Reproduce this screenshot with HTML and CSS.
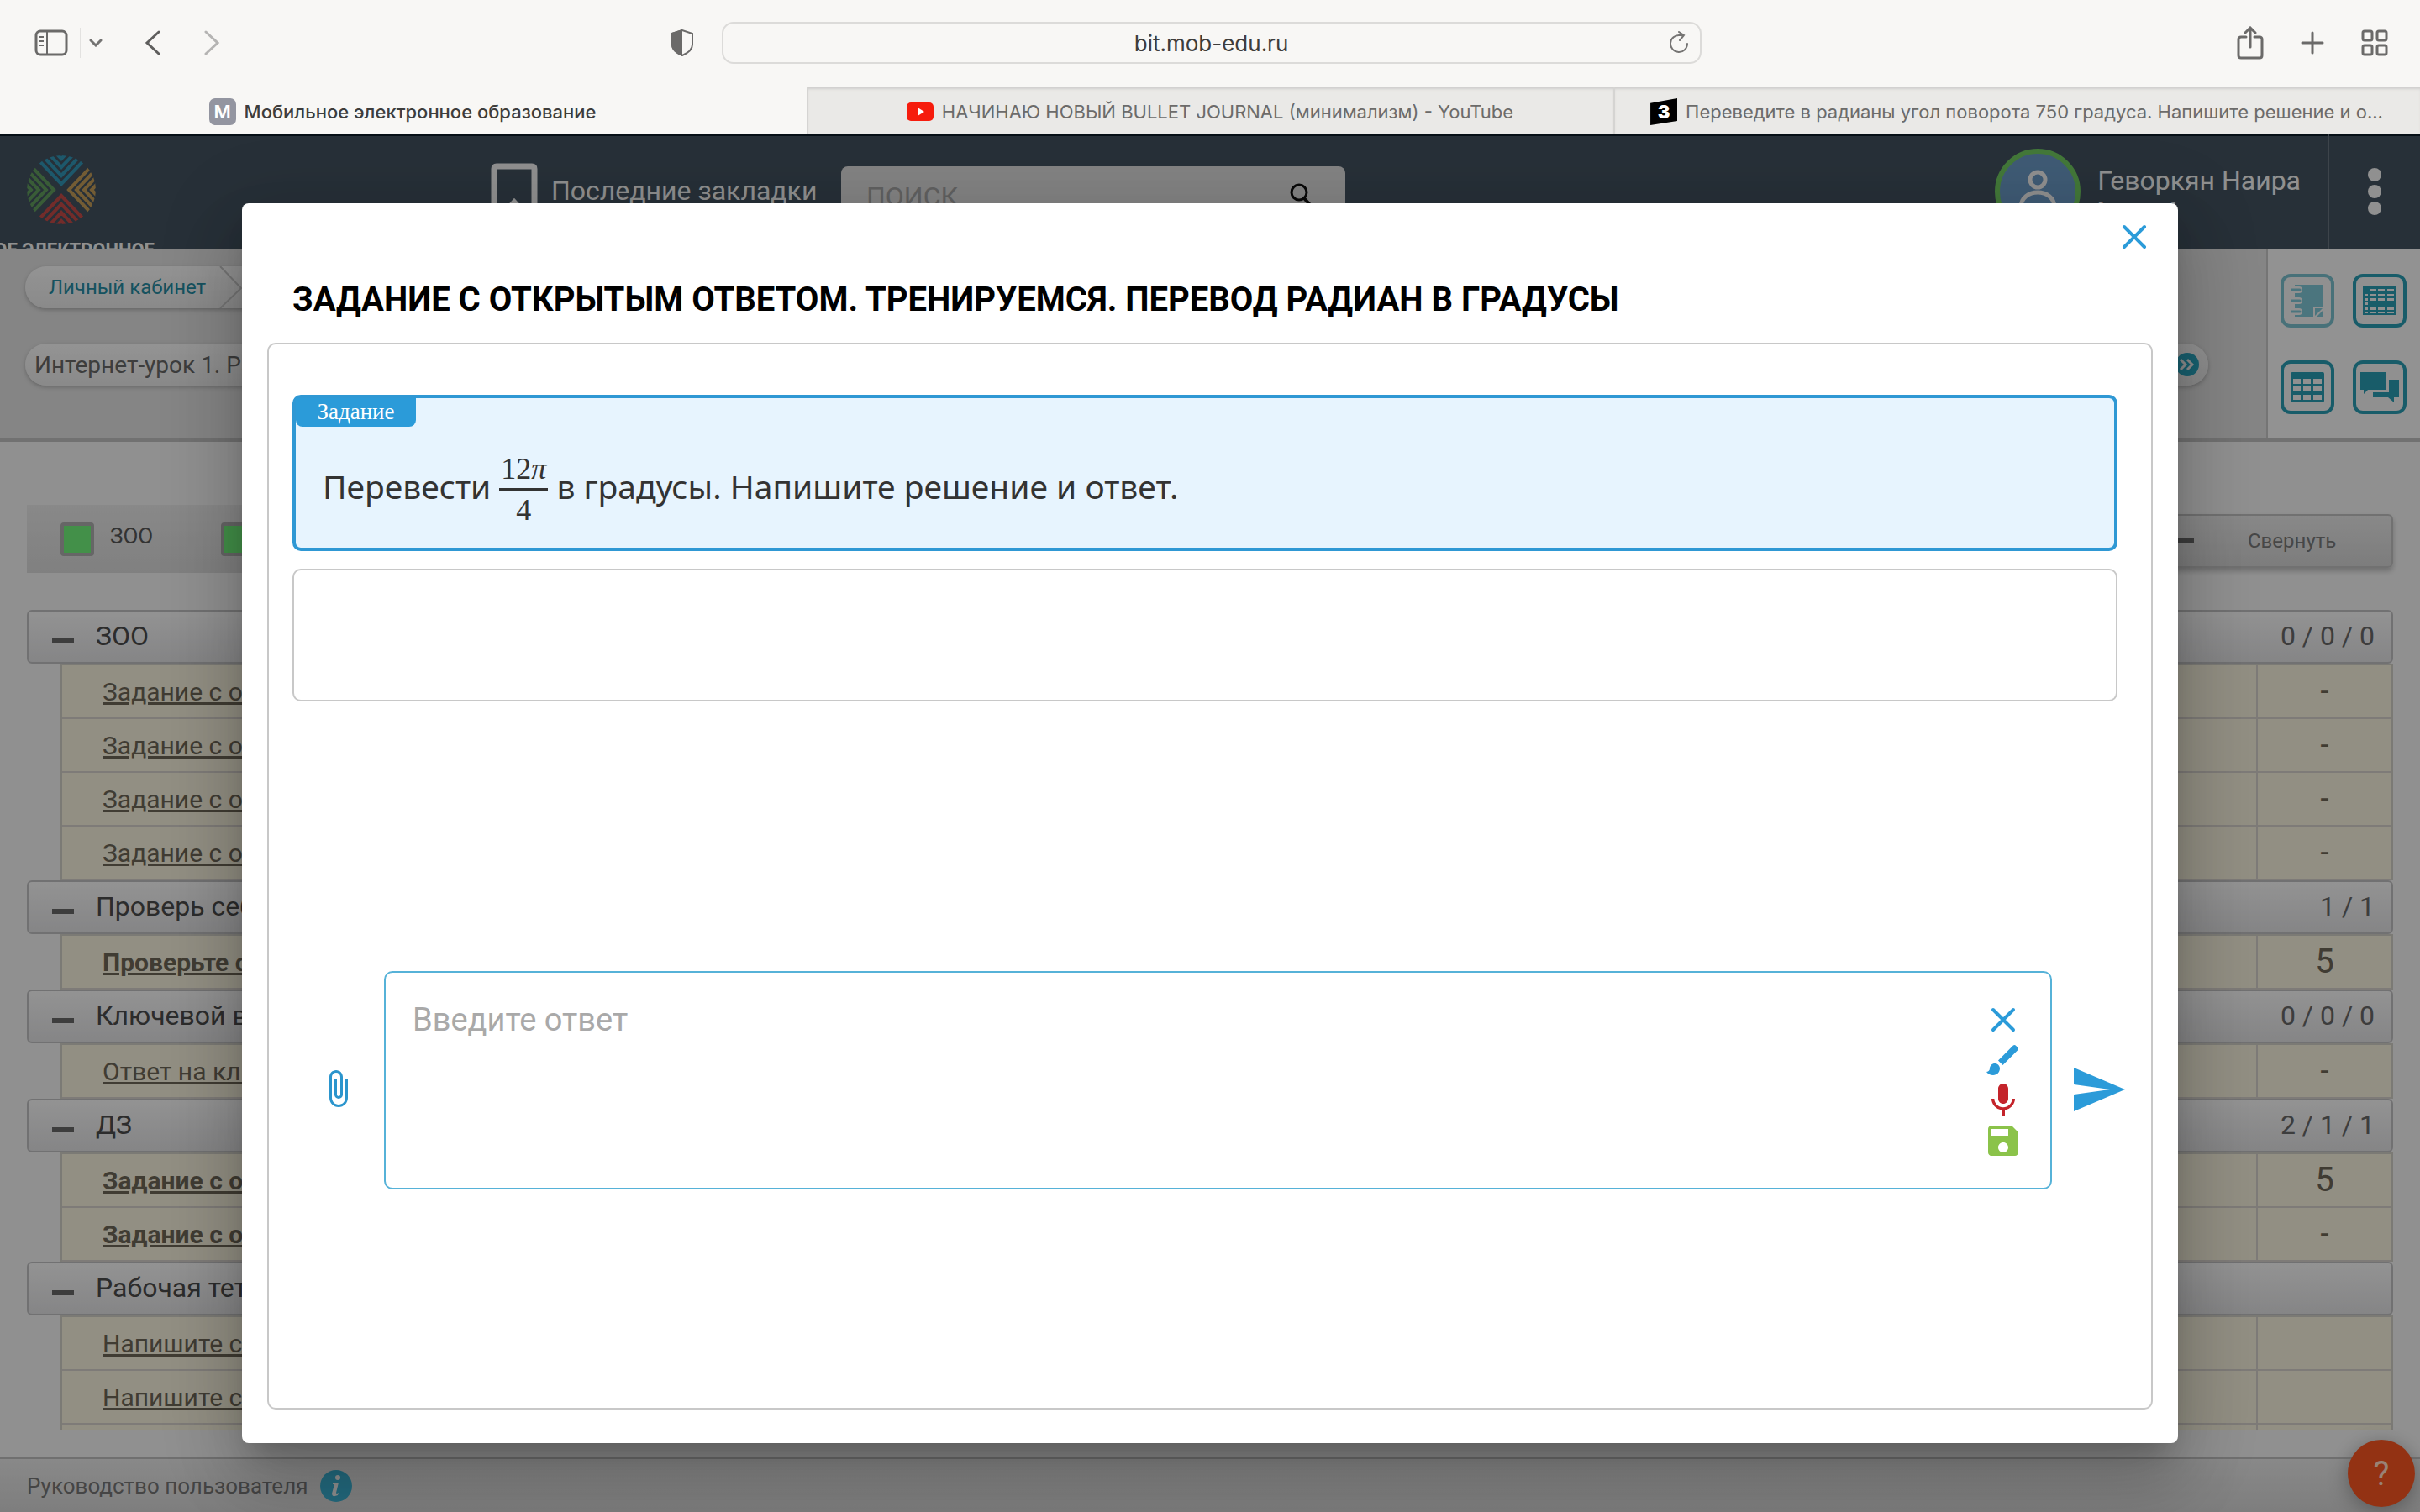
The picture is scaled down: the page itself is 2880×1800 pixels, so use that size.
FILE: index.html
```html
<!DOCTYPE html>
<html lang="ru">
<head>
    <meta charset="utf-8">
    <title>Мобильное электронное образование</title>
    <link rel="stylesheet" href="styles.css">
</head>
<body>
    <!-- Browser -->
    <header class="browser">
        <div class="toolbar">
            <div class="toolbar-left">
                <button class="tool sidebar-btn" aria-label="Боковая панель">
                    <svg width="40" height="32" viewBox="0 0 40 32" fill="none" stroke="#6b6a69" stroke-width="3"><rect x="2" y="2" width="36" height="28" rx="5"/><path d="M15 2v28M5 9h6M5 14h6M5 19h6" stroke-width="2"/></svg>
                </button>
                <button class="tool menu-btn" aria-label="Группы вкладок">
                    <svg width="16" height="10" viewBox="0 0 16 10" fill="none" stroke="#757473" stroke-width="3" stroke-linecap="round"><path d="M2 2l6 6 6-6"/></svg>
                </button>
                <button class="tool" aria-label="Назад">
                    <svg width="20" height="30" viewBox="0 0 20 30" fill="none" stroke="#5f5e5d" stroke-width="3" stroke-linecap="round"><path d="M17 2L3 15l14 13"/></svg>
                </button>
                <button class="tool forward-btn" aria-label="Вперёд">
                    <svg width="20" height="30" viewBox="0 0 20 30" fill="none" stroke="#b5b4b3" stroke-width="3" stroke-linecap="round"><path d="M3 2l14 13L3 28"/></svg>
                </button>
                <button class="tool shield" aria-label="Отчёт о конфиденциальности">
                    <svg width="28" height="34" viewBox="0 0 28 34"><path d="M14 2L2 6v13c0 6 5 10 12 13 7-3 12-7 12-13V6z" fill="none" stroke="#6b6a69" stroke-width="2"/><path d="M14 1L1 5v14c0 7 6 11 13 14z" fill="#6b6a69"/></svg>
                </button>
            </div>
            <div class="address">
                <span>bit.mob-edu.ru</span>
                <button class="tool reload" aria-label="Обновить">
                    <svg width="24" height="28" viewBox="0 0 24 28" fill="none" stroke="#757473" stroke-width="2" stroke-linecap="round"><path d="M21 15a10 10 0 1 1-9-10h5M11 1l6 4-5 6"/></svg>
                </button>
            </div>
            <div class="toolbar-right">
                <button class="tool" aria-label="Поделиться">
                    <svg width="32" height="40" viewBox="0 0 32 40" fill="none" stroke="#6b6a69" stroke-width="3" stroke-linecap="round"><path d="M11 13H5q-3 0-3 3v19q0 3 3 3h22q3 0 3-3V16q0-3-3-3h-6M16 25V3M10 8l6-6 6 6"/></svg>
                </button>
                <button class="tool" aria-label="Новая вкладка">
                    <svg width="28" height="28" viewBox="0 0 28 28" stroke="#6b6a69" stroke-width="3" stroke-linecap="round"><path d="M14 2v24M2 14h24"/></svg>
                </button>
                <button class="tool" aria-label="Обзор вкладок">
                    <svg width="32" height="32" viewBox="0 0 32 32" fill="none" stroke="#6b6a69" stroke-width="3"><rect x="2" y="2" width="11" height="11" rx="2"/><rect x="19" y="2" width="11" height="11" rx="2"/><rect x="2" y="19" width="11" height="11" rx="2"/><rect x="19" y="19" width="11" height="11" rx="2"/></svg>
                </button>
            </div>
        </div>
        <div class="tabs">
            <a href="#" class="tab active"><span class="tab-letter">М</span><span class="tab-title">Мобильное электронное образование</span></a>
            <a href="#" class="tab">
                <svg width="32" height="22" viewBox="0 0 32 22"><rect width="32" height="22" rx="5" fill="#f61c0d"/><path d="M13 6l8 5-8 5z" fill="#fff"/></svg>
                <span class="tab-title">НАЧИНАЮ НОВЫЙ BULLET JOURNAL (минимализм) - YouTube</span>
            </a>
            <a href="#" class="tab"><span class="tab-three">3</span><span class="tab-title">Переведите в радианы угол поворота 750 градуса. Напишите решение и о...</span></a>
        </div>
    </header>

    <div class="site">
        <header class="site-header">
            <div class="brand">
                <svg width="84" height="84" viewBox="0 0 84 84" fill="none" stroke-width="4">
                    <clipPath id="round"><circle cx="42" cy="42" r="41"/></clipPath>
                    <g clip-path="url(#round)">
                        <path stroke="#3193b3" d="M2-7l40 42L82-7M2-17l40 42L82-17M2-27l40 42L82-27M2-37L42 5l40-42"/>
                        <path stroke="#c04a47" d="M2 91l40-42 40 42M2 101l40-42 40 42M2 111l40-42 40 42M2 121l40-42 40 42"/>
                        <path stroke="#5f9a5c" d="M-8-1l41 43L-8 85M-17-1l41 43-41 43M-26-1l41 43-41 43M-35-1L6 42l-41 43"/>
                        <path stroke="#c09a58" d="M92-1L51 42l41 43M101-1L60 42l41 43M110-1L69 42l41 43M119-1L78 42l41 43"/>
                    </g>
                </svg>
                <div class="brand-name">МОБИЛЬНОЕ ЭЛЕКТРОННОЕ</div>
            </div>
            <a href="#" class="bookmarks">
                <svg width="56" height="76" viewBox="0 0 56 76" fill="none" stroke="#f0f0f0" stroke-width="7"><path d="M4 73V7q0-3 3-3h42q3 0 3 3v66L28 47z"/></svg>
                Последние закладки
            </a>
            <div class="search">
                <input type="text" placeholder="ПОИСК" aria-label="Поиск">
                <svg width="32" height="32" viewBox="0 0 32 32" fill="none" stroke="#111" stroke-width="3"><circle cx="13" cy="11" r="9"/><path d="M19 18l9 10" stroke-width="4"/></svg>
            </div>
            <div class="user">
                <svg width="102" height="102" viewBox="0 0 102 102"><circle cx="51" cy="51" r="48" fill="#6a98c4" stroke="#70c860" stroke-width="6"/><circle cx="51" cy="37" r="9" fill="none" stroke="#f0f0f0" stroke-width="5"/><path d="M31 70c0-24 40-24 40 0z" fill="none" stroke="#f0f0f0" stroke-width="5"/></svg>
                <div class="user-text">
                    <div class="user-name">Геворкян Наира</div>
                    <div class="user-role">[Ученик]</div>
                </div>
            </div>
            <button class="more" aria-label="Меню"><i></i><i></i><i></i></button>
        </header>

        <nav class="section-nav">
            <div class="crumbs">
                <div class="crumb-row">
                    <a href="#">Личный кабинет</a>
                    <svg width="28" height="50" viewBox="0 0 28 50" fill="none" stroke="#c4c4c4" stroke-width="2"><path d="M1 0l25 26L1 50"/></svg>
                </div>
                <div class="crumb-row lesson">
                    <span>Интернет-урок 1. Радианная мера угла</span>
                    <button class="next" aria-label="Далее">
                        <svg width="28" height="28" viewBox="0 0 28 28" fill="none" stroke="#eee" stroke-width="3"><circle cx="14" cy="14" r="14" fill="#2ba3bd" stroke="none"/><path d="M6 8l6 6-6 6M14 8l6 6-6 6"/></svg>
                    </button>
                </div>
            </div>
            <div class="tiles">
                <button class="tile faded" aria-label="Дневник">
                    <svg width="40" height="40" viewBox="0 0 40 40"><path d="M5 1h34v38H5z" fill="#30a5bd"/><path d="M4 7h6M4 20h6M4 33h6" stroke="#f0f0f0" stroke-width="8" stroke-linecap="round"/><path d="M1 7h10M1 20h10M1 33h10" stroke="#30a5bd" stroke-width="3" stroke-linecap="round"/><path d="M27 27h13v13H27z" fill="#f0f0f0"/><path d="M29 38v-9h9zM39 31v8h-8z" fill="#30a5bd"/></svg>
                </button>
                <button class="tile" aria-label="Журнал">
                    <svg width="40" height="34" viewBox="0 0 40 34"><rect width="40" height="34" fill="#2899b0"/><path d="M8 3h8v3H8zm10 0h8v3h-8zm11 0h8v3h-8zM8 9h8v2H8zm10 0h8v2h-8zm11 0h8v2h-8zM8 14h8v3H8zm10 0h8v3h-8zm11 0h8v3h-8zM8 25h8v3H8zm10 0h8v3h-8zm11 0h8v3h-8zM8 30h8v2H8zm10 0h8v2h-8zm11 0h8v2h-8zM3 9h3v2H3zm0 5h3v3H3zm0 5h3v3H3zm0 6h3v3H3zm0 5h3v2H3z" fill="#f0f0f0"/></svg>
                </button>
                <button class="tile" aria-label="Таблица">
                    <svg width="40" height="36" viewBox="0 0 40 36"><rect width="40" height="36" rx="2" fill="#2899b0"/><path d="M3 8h9v6H3zm12 0h9v6h-9zm12 0h10v6H27zM3 17h9v6H3zm12 0h9v6h-9zm12 0h10v6H27zM3 27h9v6H3zm12 0h9v6h-9zm12 0h10v6H27z" fill="#f0f0f0"/></svg>
                </button>
                <button class="tile" aria-label="Сообщения">
                    <svg width="46" height="38" viewBox="0 0 46 38" fill="#2899b0"><path d="M0 1h31v21H9l-5 5v-5H0zM34 10h12v21h-6v6l-7-6H15v-6h19z"/></svg>
                </button>
            </div>
        </nav>

        <main class="content">
            <div class="filters">
                <div class="filter-list">
                    <label><input type="checkbox" checked>ЗОО</label>
                    <label><input type="checkbox" checked></label>
                </div>
                <button class="collapse"><i class="minus"></i>Свернуть</button>
            </div>

            <div class="groups">
                <section>
                    <h2 class="group"><i class="minus"></i>ЗОО<span>0 / 0 / 0</span></h2>
                    <table>
                        <tr><td><a href="#">Задание с открытым ответом</a></td><td class="mark">-</td></tr>
                        <tr><td><a href="#">Задание с открытым ответом</a></td><td class="mark">-</td></tr>
                        <tr><td><a href="#">Задание с открытым ответом</a></td><td class="mark">-</td></tr>
                        <tr><td><a href="#">Задание с открытым ответом</a></td><td class="mark">-</td></tr>
                    </table>
                </section>
                <section>
                    <h2 class="group"><i class="minus"></i>Проверь себя<span>1 / 1</span></h2>
                    <table>
                        <tr><td><a href="#" class="done">Проверьте себя</a></td><td class="mark grade">5</td></tr>
                    </table>
                </section>
                <section>
                    <h2 class="group"><i class="minus"></i>Ключевой вопрос<span>0 / 0 / 0</span></h2>
                    <table>
                        <tr><td><a href="#">Ответ на ключевой вопрос</a></td><td class="mark">-</td></tr>
                    </table>
                </section>
                <section>
                    <h2 class="group"><i class="minus"></i>ДЗ<span>2 / 1 / 1</span></h2>
                    <table>
                        <tr><td><a href="#" class="done">Задание с открытым ответом</a></td><td class="mark grade">5</td></tr>
                        <tr><td><a href="#" class="done">Задание с открытым ответом</a></td><td class="mark">-</td></tr>
                    </table>
                </section>
                <section>
                    <h2 class="group"><i class="minus"></i>Рабочая тетрадь</h2>
                    <table>
                        <tr><td><a href="#">Напишите сообщение</a></td><td class="mark"></td></tr>
                        <tr><td><a href="#">Напишите сообщение</a></td><td class="mark"></td></tr>
                        <tr><td></td><td class="mark"></td></tr>
                    </table>
                </section>
            </div>
        </main>

        <footer class="site-footer">
            <a href="#">Руководство пользователя</a>
            <svg width="40" height="40" viewBox="0 0 40 40"><circle cx="20" cy="20" r="19" fill="#3bb0d0"/><circle cx="22" cy="10" r="3" fill="#eee"/><path d="M16 16h7l-3 12q0 2 3 0l-1 3q-7 3-7-2l3-11h-2z" fill="#eee"/></svg>
        </footer>
        <button class="help">?</button>

        <!-- Task dialog -->
        <div class="overlay">
            <div class="dialog" role="dialog" aria-labelledby="dialog-title">
                <div class="dialog-bar">
                    <button class="icon-btn" aria-label="Закрыть">
                        <svg width="48" height="48" viewBox="0 0 48 48" stroke="#2b9bd9" stroke-width="4" stroke-linecap="round"><path d="M12 12l24 24M36 12L12 36"/></svg>
                    </button>
                </div>
                <h1 id="dialog-title">ЗАДАНИЕ С ОТКРЫТЫМ ОТВЕТОМ. ТРЕНИРУЕМСЯ. ПЕРЕВОД РАДИАН В ГРАДУСЫ</h1>
                <div class="panel">
                    <div class="task">
                        <span class="task-label">Задание</span>
                        <p>Перевести <span class="fraction"><span class="top">12<i>π</i></span><span>4</span></span> в градусы. Напишите решение и ответ.</p>
                    </div>
                    <div class="history"></div>
                    <form class="answer">
                        <button type="button" class="icon-btn attach" aria-label="Прикрепить файл">
                            <svg width="48" height="48" viewBox="0 0 24 24" fill="#2b95cd"><path d="M16.500 6v11.500c0 2.210-1.790 4-4 4s-4-1.790-4-4V5a2.500 2.500 0 0 1 5 0v10.500c0 .550-.450 1-1 1s-1-.450-1-1V6H10v9.500a2.500 2.500 0 0 0 5 0V5c0-2.210-1.790-4-4-4S7 2.790 7 5v12.500c0 3.040 2.460 5.500 5.500 5.500s5.500-2.460 5.500-5.500V6h-1.500z"/></svg>
                        </button>
                        <div class="answer-box">
                            <textarea placeholder="Введите ответ" aria-label="Ответ"></textarea>
                            <div class="answer-tools">
                                <button type="button" class="icon-btn" aria-label="Очистить">
                                    <svg width="48" height="48" viewBox="0 0 48 48" stroke="#2b9bd9" stroke-width="4" stroke-linecap="round"><path d="M12 12l24 24M36 12L12 36"/></svg>
                                </button>
                                <button type="button" class="icon-btn" aria-label="Рисовать">
                                    <svg width="48" height="48" viewBox="0 0 24 24" fill="#2b9bd9"><path d="M7 14c-1.660 0-3 1.340-3 3 0 1.310-1.160 2-2 2 .920 1.220 2.490 2 4 2 2.210 0 4-1.790 4-4 0-1.660-1.340-3-3-3zm13.710-9.370l-1.340-1.340c-.390-.390-1.020-.390-1.410 0L9 12.250 11.750 15l8.960-8.960c.390-.390.390-1.020 0-1.410z"/></svg>
                                </button>
                                <button type="button" class="icon-btn" aria-label="Записать голос">
                                    <svg width="48" height="48" viewBox="0 0 24 24" fill="#c4242b"><path d="M12 14c1.660 0 3-1.340 3-3V5c0-1.660-1.340-3-3-3S9 3.340 9 5v6c0 1.660 1.340 3 3 3zm5.300-3c0 3-2.540 5.100-5.300 5.100S6.700 14 6.700 11H5c0 3.410 2.720 6.230 6 6.720V21h2v-3.280c3.280-.480 6-3.300 6-6.720h-1.700z"/></svg>
                                </button>
                                <button type="button" class="icon-btn" aria-label="Сохранить">
                                    <svg width="48" height="48" viewBox="0 0 24 24" fill="#8bc34a"><path d="M17 3H5c-1.110 0-2 .900-2 2v14c0 1.100.890 2 2 2h14c1.100 0 2-.900 2-2V7l-4-4zm-5 16c-1.660 0-3-1.340-3-3s1.340-3 3-3 3 1.340 3 3-1.340 3-3 3zm3-10H5V5h10v4z"/></svg>
                                </button>
                            </div>
                        </div>
                        <button class="icon-btn send" aria-label="Отправить">
                            <svg width="62" height="52" viewBox="0 0 62 52" fill="#2b9bd9"><path d="M0 0l61 26L0 52V32l43-6L0 20z"/></svg>
                        </button>
                    </form>
                </div>
            </div>
        </div>
    </div>
</body>
</html>
```

FILE: styles.css
```css
* {
    box-sizing: border-box;
}
body {
    margin: 0;
    height: 100vh;
    display: flex;
    flex-direction: column;
    font-family: Roboto, sans-serif;
    font-size: 30px;
    color: #555;
    overflow: hidden;
}
button {
    font: inherit;
    color: inherit;
    border: none;
    background: none;
    padding: 0;
    cursor: pointer;
}
svg {
    display: block;
    flex: none;
}
a {
    color: inherit;
}

/* Browser */
.browser {
    background: #f8f7f5;
    font-family: Inter, sans-serif;
}
.toolbar {
    height: 104px;
    display: flex;
    align-items: center;
    padding-bottom: 2px;
}
.toolbar-left {
    flex: 1;
    display: flex;
    align-items: center;
    padding-left: 41px;
}
.menu-btn {
    border-left: 1px solid #e3e2e0;
    height: 36px;
    padding-left: 10px;
    margin: 0 50px 0 14px;
}
.forward-btn {
    margin-left: 50px;
}
.shield {
    margin: 0 33px 0 auto;
}
.address {
    width: 1166px;
    height: 50px;
    border: 2px solid #dcdbd9;
    border-radius: 14px;
    display: flex;
    align-items: center;
    font-size: 26px;
    color: #3e3d3c;
}
.address span {
    flex: 1;
    text-align: center;
    padding-left: 36px;
}
.reload {
    margin-right: 12px;
}
.toolbar-right {
    flex: 1;
    display: flex;
    align-items: center;
    justify-content: flex-end;
    gap: 44px;
    padding-right: 38px;
}
.tabs {
    display: grid;
    grid-template-columns: repeat(3, 1fr);
    height: 56px;
}
.tab {
    display: flex;
    align-items: center;
    justify-content: center;
    gap: 10px;
    min-width: 0;
    padding: 2px 40px 0 38px;
    background: #eae9e7;
    border-left: 2px solid #d5d4d2;
    box-shadow: inset 0 3px 3px -1px #cfcecc;
    color: #6c6b6a;
    font-size: 22px;
    text-decoration: none;
    white-space: nowrap;
}
.tab.active {
    background: #f8f7f5;
    border: none;
    box-shadow: none;
    color: #3e3d3c;
    font-weight: 500;
}
.tab-title {
    overflow: hidden;
}
.tab-letter {
    width: 32px;
    line-height: 32px;
    border-radius: 7px;
    background: #9395a0;
    color: #fff;
    font-weight: 600;
    text-align: center;
}
.tab-three {
    flex: none;
    width: 32px;
    line-height: 32px;
    background: #000;
    clip-path: polygon(0 18%, 100% 0, 100% 84%, 0 100%);
    color: #fff;
    font-weight: 900;
    text-align: center;
}

/* Site */
.site {
    position: relative;
    flex: 1;
    min-height: 0;
    display: flex;
    flex-direction: column;
    background: #f1f1f1;
}
.site-header {
    height: 136px;
    display: flex;
    background: #41505e;
    box-shadow: inset 0 2px #0b1a25;
    color: #f0f0f0;
    font-size: 32px;
    overflow: hidden;
}
.brand {
    width: 184px;
    padding-top: 24px;
    display: flex;
    flex-direction: column;
    align-items: flex-end;
}
.brand svg {
    align-self: flex-start;
    margin-left: 31px;
}
.brand-name {
    margin-top: 14px;
    font-size: 22px;
    line-height: 32px;
    font-weight: bold;
    white-space: nowrap;
}
.bookmarks {
    margin-left: 400px;
    width: 417px;
    display: flex;
    gap: 16px;
    padding-top: 34px;
    line-height: 66px;
    text-decoration: none;
    white-space: nowrap;
}
.search {
    width: 600px;
    height: 72px;
    margin-top: 38px;
    padding: 0 36px 0 28px;
    display: flex;
    align-items: center;
    background: #dadada;
    border-radius: 8px;
}
.search input {
    flex: 1;
    border: none;
    background: none;
    font: inherit;
}
.search input::placeholder {
    color: #a2a2a2;
}
.user {
    margin-left: auto;
    padding: 17px 32px 0 0;
    display: flex;
    gap: 20px;
}
.user-text {
    padding-top: 18px;
}
.user-name {
    line-height: 40px;
}
.user-role {
    font-size: 24px;
    line-height: 32px;
}
.more {
    width: 110px;
    border-left: 2px solid #67727d;
    display: flex;
    flex-direction: column;
    align-items: center;
    justify-content: center;
    gap: 4px;
}
.more i {
    width: 16px;
    height: 16px;
    border-radius: 50%;
    background: #f0f0f0;
}

.section-nav {
    display: flex;
    height: 230px;
    background: #dedede;
    border-bottom: 4px solid #bcbcbc;
}
.crumbs {
    flex: 1;
    padding: 21px 69px 0 30px;
}
.crumb-row {
    display: flex;
    align-items: center;
    height: 50px;
    padding-left: 28px;
    border-radius: 25px;
    background: linear-gradient(#f6f6f6, #e6e6e6);
    box-shadow: 0 2px 5px #aaa;
    color: #25899f;
    font-size: 24px;
    width: 60%;
}
.crumb-row a {
    text-decoration: none;
    margin-right: 16px;
}
.crumb-row.lesson {
    width: auto;
    margin-top: 42px;
    padding: 0 11px;
    justify-content: space-between;
    color: #666;
    font-size: 28px;
}
.tiles {
    width: 183px;
    border-left: 2px solid #c4c4c4;
    background: #f3f3f3;
    display: grid;
    grid-template-columns: 64px 64px;
    grid-auto-rows: 64px;
    gap: 39px 22px;
    padding: 30px 15px;
}
.tile {
    display: flex;
    align-items: center;
    justify-content: center;
    border: 4px solid #2899b0;
    border-radius: 12px;
    background: #f0f0f0;
}
.faded {
    opacity: .6;
}

.content {
    flex: 1;
    min-height: 0;
    display: flex;
    flex-direction: column;
    padding: 75px 32px 33px;
}
.filters {
    display: flex;
    justify-content: space-between;
    margin-bottom: 44px;
}
.filter-list {
    width: 60%;
    height: 81px;
    display: flex;
    align-items: center;
    gap: 81px;
    padding-left: 40px;
    background: linear-gradient(#e4e4e4, #d6d6d6);
    font-size: 26px;
    line-height: 32px;
}
.filter-list label {
    display: flex;
    gap: 19px;
}
.filter-list input {
    appearance: none;
    width: 40px;
    height: 40px;
    margin: 0;
    border: 4px solid #aaa;
    border-radius: 4px;
    background: #70f07a;
}
.collapse {
    width: 300px;
    height: 64px;
    margin-top: 11px;
    display: flex;
    align-items: center;
    gap: 64px;
    padding-left: 35px;
    border: 2px solid #bdbdbd;
    border-radius: 6px;
    background: linear-gradient(#e4e4e4, #d0d0d0);
    box-shadow: 0 4px 6px #bbb;
    color: #777;
    font-size: 24px;
}
.minus {
    width: 26px;
    height: 6px;
    background: #666;
}
.groups {
    flex: 1;
    min-height: 0;
    overflow: hidden;
}
.group {
    display: flex;
    align-items: center;
    height: 64px;
    margin: 0;
    padding: 0 20px 2px 28px;
    border: 2px solid #bcbcbe;
    border-radius: 6px;
    background: linear-gradient(#f5f5f5, #dedee0);
    color: #4a4a4a;
    font-size: 32px;
    font-weight: normal;
}
.group .minus {
    margin: 12px 26px 0 0;
}
.group span {
    margin-left: auto;
    color: #666;
}
.groups table {
    width: calc(100% - 40px);
    margin-left: 40px;
    border-collapse: separate;
    border-spacing: 0;
    border: 2px solid #cdcbc4;
    border-bottom: none;
    background: #f3eeda;
    color: #6b6456;
}
.groups td {
    height: 64px;
    padding: 0 0 0 48px;
    border-bottom: 2px solid #d3cec8;
}
.groups .mark {
    width: 161px;
    padding: 0;
    border-left: 2px solid #d3cec8;
    text-align: center;
    font-size: 36px;
    line-height: 40px;
}
.groups .grade {
    font-size: 40px;
}
.done {
    font-weight: bold;
}
.site-footer {
    height: 65px;
    display: flex;
    align-items: center;
    gap: 14px;
    padding-left: 32px;
    border-top: 2px solid #bbb;
    background: linear-gradient(#e4e4e4, #d2d2d2);
    color: #737373;
    font-size: 26px;
}
.site-footer a {
    text-decoration: none;
}
.help {
    position: absolute;
    right: 6px;
    bottom: 6px;
    width: 80px;
    height: 80px;
    border-radius: 50%;
    background: #f65420;
    box-shadow: 0 6px 24px #999;
    color: #ffd9c4;
    font-size: 40px;
}

/* Dialog */
.overlay {
    position: absolute;
    inset: 0;
    display: flex;
    align-items: center;
    justify-content: center;
    background: rgba(0, 0, 0, .4);
}
.dialog {
    width: 80%;
    height: 90%;
    display: flex;
    flex-direction: column;
    padding: 0 30px 40px;
    border-radius: 8px;
    background: #fff;
    box-shadow: 0 22px 30px -14px rgba(0, 0, 0, .2), 0 48px 76px 6px rgba(0, 0, 0, .14), 0 18px 92px 16px rgba(0, 0, 0, .12);
}
.icon-btn {
    display: flex;
    align-items: center;
    justify-content: center;
}
.dialog-bar {
    height: 88px;
    display: flex;
    justify-content: flex-end;
    align-items: flex-start;
    padding-top: 16px;
}
.dialog-bar .icon-btn {
    margin-right: -2px;
}
h1 {
    margin: 0 0 24px 30px;
    color: #000;
    font-size: 40px;
    line-height: 54px;
    font-weight: bold;
}
.panel {
    flex: 1;
    padding: 60px 0 0 28px;
    border: 2px solid #c8c8c8;
    border-radius: 10px;
}
.task {
    height: 186px;
    margin-right: 40px;
    border: 4px solid #2f98d4;
    border-radius: 10px;
    background: #e7f4fe;
}
.task-label {
    display: block;
    width: 143px;
    height: 34px;
    line-height: 32px;
    border-radius: 0 0 8px 8px;
    background: #2b9bd9;
    color: #fff;
    font-family: "Liberation Serif", serif;
    font-size: 27px;
    text-align: center;
}
.task p {
    display: flex;
    align-items: center;
    gap: 10px;
    margin: 19px 0 0 32px;
    color: #333;
    font-family: "Noto Sans", sans-serif;
    font-size: 39px;
}
.fraction {
    display: flex;
    flex-direction: column;
    align-items: center;
    margin-top: 8px;
    font-family: "Liberation Serif", serif;
    font-size: 36px;
    line-height: 46px;
}
.fraction .top {
    padding: 0 2px;
    border-bottom: 3px solid #333;
}
.history {
    height: 158px;
    margin: 21px 40px 0 0;
    border: 2px solid #c8c8c8;
    border-radius: 10px;
}
.answer {
    display: flex;
    margin: 321px 4px 0 0;
}
.attach {
    width: 109px;
    padding: 20px 2px 0 0;
}
.answer-box {
    flex: 1;
    height: 260px;
    display: flex;
    padding: 32px;
    border: 2px solid #56b2d8;
    border-radius: 10px;
}
.answer-box textarea {
    flex: 1;
    padding: 0;
    border: none;
    outline: none;
    resize: none;
    background: none;
    font: 38px/48px Roboto, sans-serif;
}
.answer-box textarea::placeholder {
    color: #a9a9a9;
}
.send {
    width: 114px;
    padding-top: 22px;
}
```
